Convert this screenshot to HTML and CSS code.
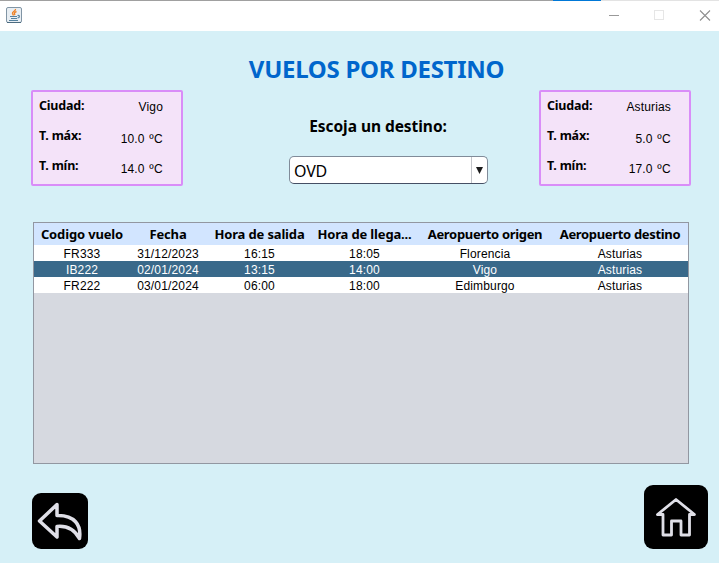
FILE: index.html
```html
<!DOCTYPE html>
<html lang="es">
<head>
<meta charset="utf-8">
<title>Vuelos por destino</title>
<link rel="stylesheet" href="styles.css">
</head>
<body>
<header class="titlebar">
  <svg class="java" width="16" height="16" viewBox="0 0 16 16" fill="none">
    <rect x=".5" y=".5" width="15" height="15" rx="1.5" fill="#e8eef3" stroke="#8195a5"/>
    <path d="M1 15.500h14" stroke="#4c6b80"/>
    <path d="M9.500 2C10 4 6 4.500 6.500 6.500L7.500 8.500M10.500 4.500C8 5.500 8 6.500 9 8" stroke="#ee8124" stroke-width="1.400"/>
    <path d="M4 9.500h7M5 11.500h6M3 13.500h9M11.500 8.500c2.500-.5 2.500 2 0 2.500" stroke="#55829f" stroke-width="1.200"/>
  </svg>
  <svg class="controls" width="104" height="12" viewBox="0 0 104 12" fill="none">
    <path d="M0 5.500h10" stroke="#999"/>
    <rect x="45.500" y=".5" width="9" height="9" stroke="#e6e6e6"/>
    <path d="M91 .5l10 10M101 .5l-10 10" stroke="#8f8f8f" stroke-width="1.100"/>
  </svg>
</header>
<main>
  <section class="top">
    <dl class="card">
      <dt>Ciudad:</dt><dd>Vigo</dd>
      <dt>T. máx:</dt><dd class="temp">10.0 <span>ºC</span></dd>
      <dt>T. mín:</dt><dd class="temp">14.0 <span>ºC</span></dd>
    </dl>
    <div class="center">
      <h1>VUELOS POR DESTINO</h1>
      <h2>Escoja un destino:</h2>
      <div class="combo"><span class="value">OVD</span><span class="arrow"><svg width="7" height="7" viewBox="0 0 7 7"><path d="M0 0h7L3.500 7z" fill="#1c1c1c"/></svg></span></div>
    </div>
    <dl class="card">
      <dt>Ciudad:</dt><dd>Asturias</dd>
      <dt>T. máx:</dt><dd class="temp">5.0 <span>ºC</span></dd>
      <dt>T. mín:</dt><dd class="temp">17.0 <span>ºC</span></dd>
    </dl>
  </section>
  <div class="scroll">
    <table>
      <colgroup><col class="c1"><col class="c2"><col class="c3"><col class="c4"><col class="c5"><col class="c6"></colgroup>
      <thead><tr><th>Codigo vuelo</th><th>Fecha</th><th>Hora de salida</th><th>Hora de llega...</th><th class="airport">Aeropuerto origen</th><th class="airport">Aeropuerto destino</th></tr></thead>
      <tbody>
        <tr><td>FR333</td><td>31/12/2023</td><td>16:15</td><td>18:05</td><td>Florencia</td><td>Asturias</td></tr>
        <tr class="selected"><td>IB222</td><td>02/01/2024</td><td>13:15</td><td>14:00</td><td>Vigo</td><td>Asturias</td></tr>
        <tr><td>FR222</td><td>03/01/2024</td><td>06:00</td><td>18:00</td><td>Edimburgo</td><td>Asturias</td></tr>
      </tbody>
    </table>
  </div>
  <footer>
    <svg width="56" height="56" viewBox="0 0 56 56" fill="none" stroke="#dfdfe7" stroke-width="3.500" stroke-linejoin="round">
      <rect width="56" height="56" rx="9" fill="#000" stroke="none"/>
      <path d="M25 11.500L7.500 28L25 44V33.500C35 32.500 42 36 47.500 45.500C49.500 32 42.500 22 25 22.500Z"/>
    </svg>
    <svg width="64" height="64" viewBox="0 0 64 64" fill="none" stroke="#dfdfe7" stroke-width="2.800" stroke-linejoin="round">
      <rect width="64" height="64" rx="9" fill="#000" stroke="none"/>
      <path d="M32 14.500L13.500 29.500H19V50H27.500V36H37V50H45.500V29.500H50.500Z"/>
    </svg>
  </footer>
</main>
</body>
</html>
```
FILE: styles.css
```css
* { box-sizing: border-box; margin: 0; padding: 0; }
body {
  width: 719px; height: 563px; overflow: hidden;
  background: #d6f0f7; color: #000;
  font-family: "Liberation Sans", Arial, sans-serif;
}
.titlebar {
  display: flex; justify-content: space-between; align-items: flex-start;
  height: 31px; padding: 7px 6px 0; background: #fff;
  background-image: linear-gradient(90deg, #a0a0a0 553px, #0078d7 553px 601px, #e3e3e3 601px);
  background-size: 100% 1px; background-repeat: no-repeat;
}
.controls { margin-top: 3px; }
.top { display: flex; justify-content: space-between; height: 191px; padding: 0 28px 0 31px; }
.card {
  display: grid; grid-template-columns: 60px 1fr; grid-template-rows: repeat(3, 30px);
  align-content: start; width: 152px; height: 96px; margin-top: 59px; padding: 0 18px 0 6px;
  border: 2px solid #d98df8; border-radius: 2px; background: #f4e3f9;
}
.card dt {
  font: bold 12.5px/28px "Noto Sans", sans-serif; letter-spacing: -.2px;
}
.card dd { font-size: 12px; line-height: 30px; text-align: right; letter-spacing: .15px; }
.card .temp { padding-top: 2px; }
.temp span { margin-left: 1px; letter-spacing: .4px; }
.center { display: flex; flex-direction: column; align-items: center; width: 300px; }
h1 { margin: 21px 0 0 31px; font: bold 24px/34px "Noto Sans", sans-serif; letter-spacing: -.28px; color: #0066cc; white-space: nowrap; }
h2 { margin: 28px 0 0 34px; font: bold 15.5px/24px "Noto Sans", sans-serif; letter-spacing: -.05px; white-space: nowrap; }
.combo {
  display: flex; width: 199px; height: 28px; margin: 18px 0 0 55px;
  border: 1px solid #808b99; border-bottom-color: #454f64; border-radius: 5px; background: #fff; overflow: hidden;
}
.value { flex: 1; padding: 1px 0 0 4px; font: 16px/27px "Noto Sans", sans-serif; letter-spacing: -.2px; }
.arrow { display: flex; align-items: center; justify-content: center; width: 16px; border-left: 1px solid #c3c5ca; }
.scroll { width: 656px; height: 242px; margin-left: 33px; border: 1px solid #9297a1; background: #d6d9e0; }
table { width: 654px; table-layout: fixed; border-collapse: collapse; text-align: center; }
.c1 { width: 96px; } .c2 { width: 76px; } .c3 { width: 107px; }
.c4 { width: 103px; } .c5 { width: 138px; } .c6 { width: 134px; }
th { height: 22px; font: bold 13px/22px "Noto Sans", sans-serif; letter-spacing: -.15px; background: #d2e5ff; white-space: nowrap; }
th.airport { letter-spacing: -.33px; }
th:last-child, td:last-child { padding-right: 2px; }
td { height: 16px; padding-top: 2px; font-size: 12px; line-height: 14px; letter-spacing: .15px; background: #fff; white-space: nowrap; }
.selected td { color: #fff; background: #39698a; }
footer { display: flex; justify-content: space-between; align-items: flex-end; height: 85px; padding: 0 11px 0 32px; }
```
